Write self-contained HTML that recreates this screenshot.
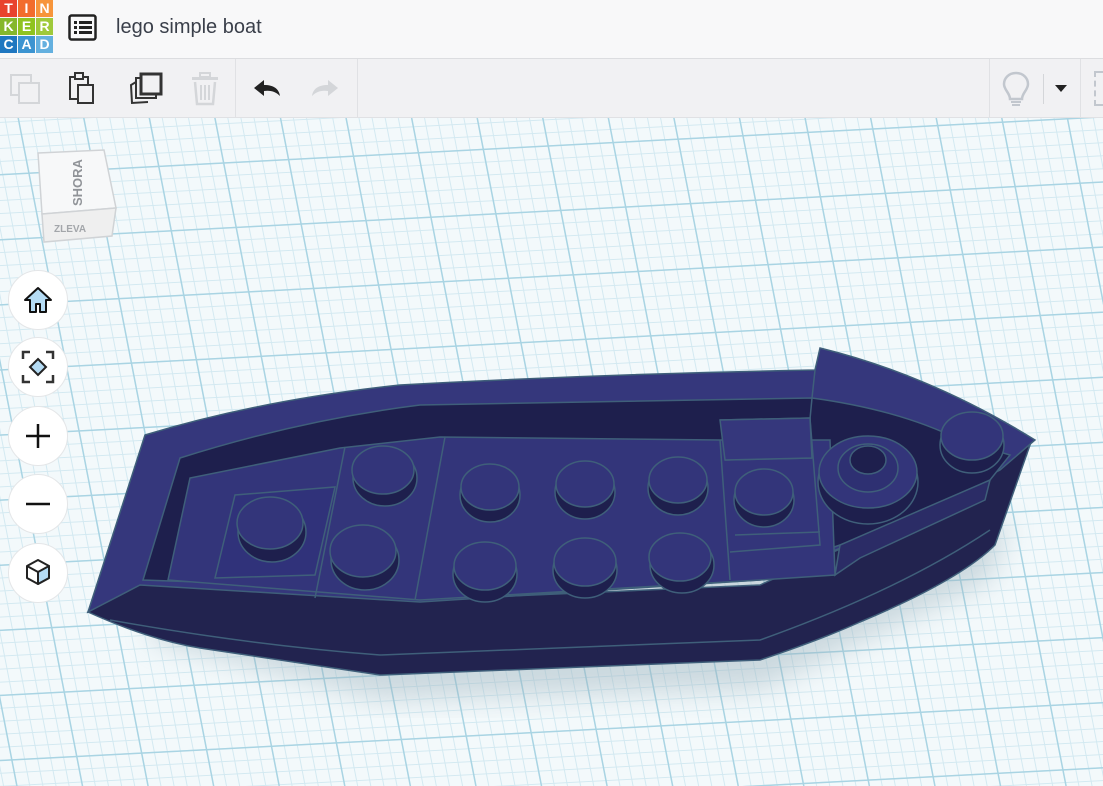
<!DOCTYPE html>
<html style="overflow:hidden"><head><meta charset="utf-8"><style>
*{margin:0;padding:0;box-sizing:border-box}
html,body{width:1103px;height:786px;overflow:hidden}
body{font-family:"Liberation Sans",sans-serif;background:#eef6f9;position:relative}
#hdr{position:absolute;left:0;top:0;width:1103px;height:59px;background:#f8f8f9;border-bottom:1px solid #dcdde0;z-index:2}
#tb{position:absolute;left:0;top:59px;width:1103px;height:59px;background:#f1f1f3;border-bottom:1px solid #e0e1e4;z-index:2}
#canvas{position:absolute;left:0;top:118px;width:1103px;height:668px;overflow:hidden;background:#f2f8fb;z-index:1}
#grid{position:absolute;left:-300px;top:-300px;width:1800px;height:1300px;transform:rotate(-3deg) skewX(8deg);z-index:0;
background-color:#f3f9fb;
background-image:linear-gradient(#a9d4e3 1.5px,transparent 1.5px),linear-gradient(90deg,#a9d4e3 1.5px,transparent 1.5px),linear-gradient(#d3e9f1 1px,transparent 1px),linear-gradient(90deg,#d3e9f1 1px,transparent 1px);
background-size:65px 65px,65px 65px,13px 13px,13px 13px}
.logo{position:absolute;left:0;top:0;display:grid;grid-template-columns:repeat(3,17px);gap:1px}
.logo div{width:17px;height:17px;color:#fff;font-weight:bold;font-size:14px;text-align:center;line-height:17px}
.circ{position:absolute;left:8px;width:60px;height:60px;border-radius:50%;background:#fff;border:1px solid #e4e6e8;display:flex;align-items:center;justify-content:center;z-index:3}
.sep{position:absolute;top:60px;width:1px;height:58px;background:#e0e1e4}
</style></head><body>
<div id="hdr">
<div class="logo">
<div style="background:#e8432d">T</div><div style="background:#f26c2c">I</div><div style="background:#f7953b">N</div>
<div style="background:#85b72c">K</div><div style="background:#8fc31f">E</div><div style="background:#9fc93b">R</div>
<div style="background:#1f77c0">C</div><div style="background:#3c94d1">A</div><div style="background:#64b0df">D</div>
</div>
<svg style="position:absolute;left:68px;top:14px" width="30" height="28" viewBox="0 0 30 28"><rect x="1.5" y="1.5" width="26" height="24" rx="2" fill="none" stroke="#222" stroke-width="2.5"/><g fill="#222"><rect x="6" y="7" width="3" height="3"/><rect x="11" y="7" width="13" height="3"/><rect x="6" y="12" width="3" height="3"/><rect x="11" y="12" width="13" height="3"/><rect x="6" y="17" width="3" height="3"/><rect x="11" y="17" width="13" height="3"/></g></svg>
<div style="position:absolute;left:116px;top:16px;font-size:20px;color:#3a3f4a">lego simple boat</div>
</div>
<div id="tb">
<svg style="position:absolute;left:9px;top:14px" width="32" height="32"><rect x="2" y="2" width="20" height="20" fill="none" stroke="#d4d6d9" stroke-width="2"/><rect x="10" y="10" width="20" height="20" fill="#f1f1f3" stroke="#d4d6d9" stroke-width="2"/></svg>
<svg style="position:absolute;left:68px;top:13px" width="32" height="34"><rect x="2" y="5" width="18" height="22" fill="none" stroke="#333" stroke-width="2"/><rect x="7" y="1" width="8" height="6" fill="#f1f1f3" stroke="#333" stroke-width="2"/><rect x="10" y="13" width="15" height="18" fill="#f1f1f3" stroke="#333" stroke-width="2"/></svg>
<svg style="position:absolute;left:128px;top:13px" width="36" height="36"><path d="M8 10 L3 13 L4 31 L20 30" fill="none" stroke="#333" stroke-width="2"/><rect x="8" y="6" width="20" height="20" fill="#f1f1f3" stroke="#333" stroke-width="2"/><rect x="13" y="2" width="20" height="20" fill="#f1f1f3" stroke="#333" stroke-width="3"/></svg>
<svg style="position:absolute;left:190px;top:12px" width="30" height="36"><rect x="2" y="6" width="26" height="3" fill="#d4d6d9"/><rect x="10" y="2" width="10" height="4" fill="none" stroke="#d4d6d9" stroke-width="2"/><path d="M5 11 L7 33 L23 33 L25 11" fill="none" stroke="#d4d6d9" stroke-width="2.5"/><path d="M11 14v15M15 14v15M19 14v15" stroke="#d4d6d9" stroke-width="2"/></svg>
<div class="sep" style="left:235px;top:0"></div>
<svg style="position:absolute;left:252px;top:19px" width="30" height="22"><path d="M2 10 L12 2 L12 7 C22 7 27 11 28 18 C24 14 19 12 12 13 L12 18 Z" fill="#222"/></svg>
<svg style="position:absolute;left:310px;top:19px" width="30" height="22"><path d="M28 10 L18 2 L18 7 C8 7 3 11 2 18 C6 14 11 12 18 13 L18 18 Z" fill="#d4d6d9"/></svg>
<div class="sep" style="left:357px;top:0"></div>
<div class="sep" style="left:989px;top:0"></div>
<svg style="position:absolute;left:1002px;top:12px" width="28" height="38"><path d="M14 2 C6 2 2 8 2 13 C2 19 8 22 8 28 L20 28 C20 22 26 19 26 13 C26 8 22 2 14 2 Z" fill="none" stroke="#c2c7ce" stroke-width="2.5"/><path d="M9 31h10M10 34h8" stroke="#c2c7ce" stroke-width="2"/></svg>
<div style="position:absolute;left:1043px;top:15px;width:1px;height:30px;background:#d4d6d9"></div>
<div style="position:absolute;left:1055px;top:26px;width:0;height:0;border-left:6px solid transparent;border-right:6px solid transparent;border-top:7px solid #222"></div>
<div class="sep" style="left:1080px;top:0"></div>
<div style="position:absolute;left:1094px;top:12px;width:9px;height:35px;border:2px dashed #c2c7ce;border-right:none"></div>
</div>
<div id="canvas"><div id="grid"></div>
<svg style="position:absolute;left:0;top:0;z-index:2" width="1103" height="668" viewBox="0 118 1103 668">
<defs><filter id="sh"><feGaussianBlur stdDeviation="14"/></filter></defs>
<path d="M150 640 L380 700 L760 690 L990 580 L1010 520 L160 600Z" fill="#9ab0bb" opacity=".45" filter="url(#sh)"/>
<path d="M88 612 Q150 640 200 648 L380 675 L760 660 Q820 640 860 622 Q960 580 995 545 L1030 445 L860 540 L760 585 L420 600 L140 583 Z" fill="#22234f" stroke="#3f5f7a" stroke-width="1.5"/>
<path d="M110 620 Q250 645 380 655 L760 640 Q900 590 990 530" fill="none" stroke="#3f5f7a" stroke-width="1.5"/>
<path d="M88 612 L145 435 Q260 400 400 385 Q600 374 815 370 L820 348 Q930 375 1035 440 L1000 470 Q900 520 860 540 Q800 565 760 580 L420 602 L140 585 Z" fill="#35377c" stroke="#3f5f7a" stroke-width="1.5"/>
<path d="M143 580 L180 458 Q300 420 420 405 L812 398 Q900 410 960 440 L1010 455 L990 480 L880 530 L840 545 L760 572 L420 590 Z" fill="#1e1f4d" stroke="#3f5f7a" stroke-width="1.5"/>
<path d="M812 398 L815 370 M812 398 L808 440" stroke="#3f5f7a" stroke-width="1.5"/>
<path d="M168 580 L190 478 L340 448 L440 437 L720 440 L830 440 L835 575 L760 580 L420 600 Z" fill="#33357a" stroke="#3f5f7a" stroke-width="1.5"/>
<path d="M215 578 L235 495 L335 487 L315 575 Z" fill="#30327a" stroke="#3f5f7a" stroke-width="1.5"/>
<path d="M315 598 L345 447 M415 600 L445 437 M720 440 L730 580 M720 420 L810 418 L820 545 L730 552 M725 460 L812 458 M735 535 L820 532" stroke="#3f5f7a" stroke-width="1.5" fill="none"/>
<path d="M720 420 L810 418 L812 458 L725 460Z" fill="#35377c" stroke="#3f5f7a" stroke-width="1.5"/>
<path d="M835 575 L840 545 L990 480 L985 500 L860 558 Z" fill="#2b2c66" stroke="#3f5f7a" stroke-width="1.5"/>
<g stroke="#3f5f7a" stroke-width="1.5">
<g fill="#1e1f4d">
<ellipse cx="272" cy="532" rx="34" ry="30"/><ellipse cx="365" cy="560" rx="34" ry="30"/><ellipse cx="385" cy="478" rx="32" ry="28"/>
<ellipse cx="490" cy="495" rx="30" ry="27"/><ellipse cx="585" cy="492" rx="30" ry="27"/><ellipse cx="678" cy="488" rx="30" ry="27"/>
<ellipse cx="485" cy="574" rx="32" ry="28"/><ellipse cx="585" cy="570" rx="32" ry="28"/><ellipse cx="682" cy="565" rx="32" ry="28"/>
<ellipse cx="764" cy="500" rx="30" ry="27"/><ellipse cx="868" cy="482" rx="50" ry="42"/><ellipse cx="972" cy="445" rx="32" ry="28"/>
</g>
<g fill="#33357a">
<ellipse cx="270" cy="523" rx="33" ry="26"/><ellipse cx="363" cy="551" rx="33" ry="26"/><ellipse cx="383" cy="470" rx="31" ry="24"/>
<ellipse cx="490" cy="487" rx="29" ry="23"/><ellipse cx="585" cy="484" rx="29" ry="23"/><ellipse cx="678" cy="480" rx="29" ry="23"/>
<ellipse cx="485" cy="566" rx="31" ry="24"/><ellipse cx="585" cy="562" rx="31" ry="24"/><ellipse cx="680" cy="557" rx="31" ry="24"/>
<ellipse cx="764" cy="492" rx="29" ry="23"/><ellipse cx="868" cy="472" rx="49" ry="36"/><ellipse cx="972" cy="436" rx="31" ry="24"/>
</g>
<ellipse cx="868" cy="468" rx="30" ry="24" fill="#2e3072"/><ellipse cx="868" cy="460" rx="18" ry="14" fill="#1e1f4d"/>
</g>
</svg>
<div style="position:absolute;left:36px;top:30px;width:80px;height:96px;z-index:3">
<svg width="82" height="96"><path d="M2 5 L68 2 L80 60 L6 66Z" fill="#f7f8f9" stroke="#d0d3d6" stroke-width="1.5"/><path d="M6 66 L80 60 L76 88 L8 94Z" fill="#efefef" stroke="#d0d3d6" stroke-width="1.5"/>
<text x="0" y="0" transform="translate(46 58) rotate(-90)" font-family="Liberation Sans" font-size="13" font-weight="bold" fill="#909398">SHORA</text>
<text x="18" y="84" font-family="Liberation Sans" font-size="10" font-weight="bold" fill="#a3a6aa">ZLEVA</text></svg>
</div>
<div class="circ" style="top:152px"><svg width="32" height="30"><path d="M16 3 L29 15 L24 15 L24 27 L18 27 L18 19 L14 19 L14 27 L8 27 L8 15 L3 15 Z" fill="#b5dcf5" stroke="#111" stroke-width="2" stroke-linejoin="round"/></svg></div>
<div class="circ" style="top:219px"><svg width="34" height="34"><path d="M2 9V2H9M25 2H32V9M32 25V32H25M9 32H2V25" fill="none" stroke="#333" stroke-width="2.5"/><path d="M17 9 L25 17 L17 25 L9 17Z" fill="#b5dcf5" stroke="#222" stroke-width="2"/></svg></div>
<div class="circ" style="top:288px"><svg width="28" height="28"><path d="M14 2V26M2 14H26" stroke="#111" stroke-width="2.5"/></svg></div>
<div class="circ" style="top:356px"><svg width="28" height="28"><path d="M2 14H26" stroke="#111" stroke-width="2.5"/></svg></div>
<div class="circ" style="top:425px"><svg width="32" height="32"><path d="M16 3 L27 9 L27 21 L16 27 L5 21 L5 9Z" fill="#fff" stroke="#222" stroke-width="2" stroke-linejoin="round"/><path d="M16 15 L27 9 L27 21 L16 27Z" fill="#b5dcf5" stroke="#222" stroke-width="2" stroke-linejoin="round"/><path d="M5 9 L16 15" stroke="#222" stroke-width="2"/></svg></div>
</div>
</body></html>
